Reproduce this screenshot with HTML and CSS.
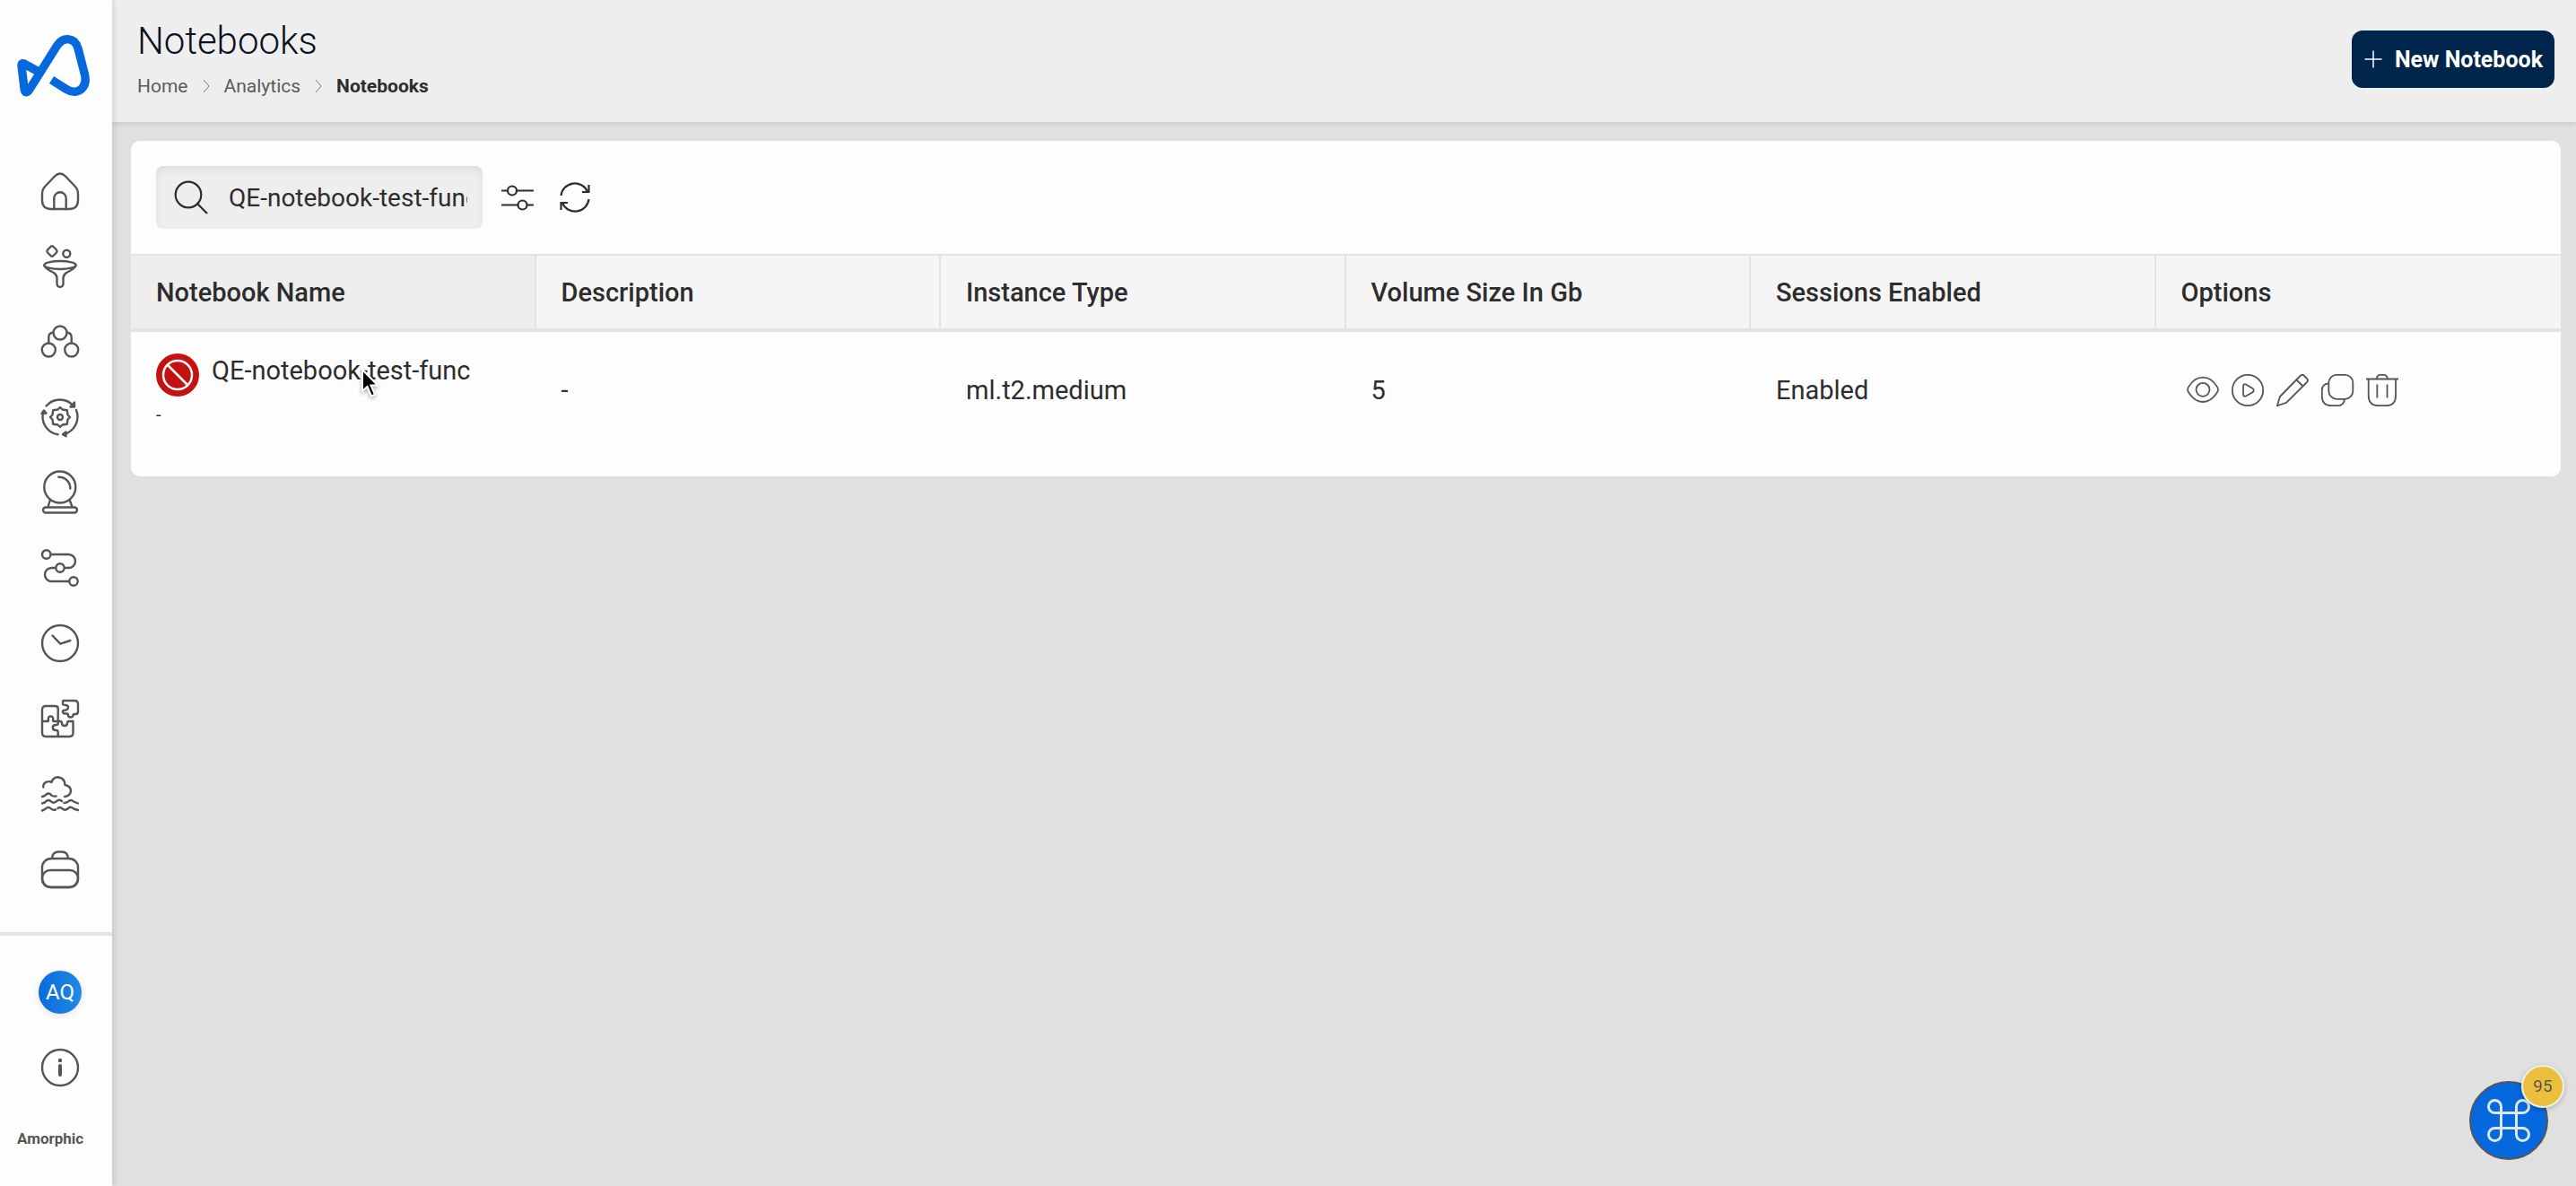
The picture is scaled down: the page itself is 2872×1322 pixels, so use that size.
FILE: index.html
```html
<!DOCTYPE html>
<html lang="en">
<head>
    <meta charset="UTF-8">
    <meta name="viewport" content="width=device-width, initial-scale=1">
    <title>Notebooks</title>
    <link rel="stylesheet" href="styles.css">
</head>
<body>
    <!-- side navigation -->
    <aside class="sidebar">
        <a href="#" class="logo" aria-label="Amorphic home">
            <svg width="81" height="69" viewBox="19 39 81 69" fill="none" stroke="#0568dc" stroke-width="9.4" stroke-linejoin="round">
                <path d="M57.5 89 L74 99.5 C86 107 98 98 94.500 83 L87 54 C84 42 71 40 63.500 51 L33 99.500 C30.500 104 27.500 104 27 98.500 L24 73 C24 70 26 70 28.500 72 L45 81"/>
            </svg>
        </a>
        <nav class="menu">
            <a href="#" aria-label="Home">
                <svg class="icon" viewBox="0 0 42 42"><path d="M4.500 15.500 L15 4.500 Q21 -1.500 27 4.500 L37.500 15.500 Q41 19 41 24 V31 Q41 41 31 41 H11 Q1 41 1 31 V24 Q1 19 4.500 15.500Z"/><path d="M14.300 41V29a6.700 6.700 0 0 1 13.400 0V41"/></svg>
            </a>
            <a href="#" aria-label="Ingestion">
                <svg class="icon" viewBox="0 0 42 42"><path d="M10.500 -1 Q12 -2.500 13.500 -1 L17 2.500 Q18 4 17 5.500 L13.500 9 Q12 10.500 10.500 9 L7 5.500 Q6 4 7 2.500Z"/><circle cx="28.300" cy="6.700" r="4"/><ellipse cx="21" cy="19.500" rx="17.700" ry="4.500"/><path d="M3.500 20.500 Q5 23.500 14 28 Q17.500 30.500 17.500 34 V40.500 a3.500 3.500 0 0 0 7 0 V34 Q24.500 30.500 28 28 Q37 23.500 38.500 20.500"/></svg>
            </a>
            <a href="#" aria-label="Datasets">
                <svg class="icon" viewBox="0 0 42 42"><circle cx="21" cy="11" r="7.500"/><circle cx="8.300" cy="30" r="7.500"/><circle cx="33.700" cy="30" r="7.500"/><path d="M13.500 10.500 Q8.300 11 8.300 16 V22.500 M28.500 10.500 Q33.700 11 33.700 16 V22.500"/></svg>
            </a>
            <a href="#" aria-label="Transformation">
                <svg class="icon" viewBox="0 0 42 42"><path d="M5.500 8.500 A20 20 0 0 1 36 8.500 M39 13 A20 20 0 0 1 25 40 M18.500 40.300 A20 20 0 0 1 2.500 14.500"/><path fill="#555" d="M37 4.500 V9.500 H32.500Z M27.500 37.500 L24 40.300 L27.500 42.300Z M0.500 17 L3 13.500 L5.500 16.500Z"/><path d="M21 10 L23.500 12.500 L28.800 13.200 L29.500 18.500 L32 21 L29.500 23.500 L28.800 28.800 L23.500 29.500 L21 32 L18.500 29.500 L13.200 28.800 L12.500 23.500 L10 21 L12.500 18.500 L13.200 13.200 L18.500 12.500Z"/><circle cx="21" cy="21" r="3"/></svg>
            </a>
            <a href="#" aria-label="Insights">
                <svg class="icon" viewBox="0 0 42 42"><circle cx="20.800" cy="15" r="17.500"/><path d="M19.300 3.700 A12.500 12.500 0 0 1 32.300 16.500 M10 29 L7.500 37 M31.500 29 L34.500 37"/><rect x="2" y="37.500" width="38" height="6" rx="3"/></svg>
            </a>
            <a href="#" aria-label="Workflows">
                <svg class="icon" viewBox="0 0 42 42"><circle cx="5.700" cy="6" r="4.700"/><circle cx="21" cy="21" r="4.700"/><circle cx="36" cy="36" r="4.700"/><path d="M10.500 6 H30.500 a7.500 7.500 0 0 1 0 15 H26 M16 21 H11.500 a7.500 7.500 0 0 0 0 15 H31"/></svg>
            </a>
            <a href="#" aria-label="Schedules">
                <svg class="icon" viewBox="0 0 42 42"><circle cx="21" cy="21" r="20"/><path d="M12.500 12.500 L21.300 21.700 L32.300 18"/></svg>
            </a>
            <a href="#" aria-label="Apps">
                <svg class="icon" viewBox="0 0 42 42"><path d="M1 37 V11 Q1 7 5 7 H15.500 Q18.700 7 18.700 10 V24 H14 Q12.500 24 13.200 22 Q13.500 18.500 10.500 18.500 Q7.500 18.500 7.800 22 Q8.500 24 7 24 H1 M18.700 24 H21 Q23 24 23 26 Q23 29 26 29 Q29 29 29 26 Q29 24 31 24 H35.500 V37 Q35.500 41 31.500 41 H5 Q1 41 1 37 M18.700 24 V26.500 Q18.500 28.500 16.500 28 Q12.800 28 12.800 31 Q12.800 34 16.500 34 Q18.500 34 18.700 36 V41"/><path d="M24 5 V2 Q24 1 25 1 H37 Q41 1 41 5 V13 Q41 16 38.500 16 H37 Q35.500 16 35.500 17.500 Q35 19.500 32.500 19.500 Q30 19.500 30 17 Q30 15.500 28.500 15.500 H26.500 Q24 15.500 24 13 Q24 11.500 27 11.500 Q30 11 30 8.500 Q30 6 27 6 Q24.500 6 24 5Z"/></svg>
            </a>
            <a href="#" aria-label="Data lakes">
                <svg class="icon" viewBox="0 0 42 42"><path d="M2.300 13.500 Q2 8.500 6.500 7.500 Q9 6.500 11.500 8 Q13 2.300 18.700 2.300 Q26 3 26.500 11 Q33 12 33 18 Q32 23.500 26 24"/><path d="M1 24 Q4 23.500 5.500 21.500 Q8 19.500 10.500 21.500 Q12 24 16.500 23.500 M1 31.500 Q4 31 5.500 29 Q8 27 10.500 29 Q13 32 16.500 29.500 Q20 26.500 23 29 M25.500 31 Q29 31 31 28.800 Q33.500 27 36 29.500 L41 31.500 M1 39.500 Q4 38.500 6 36.500 Q8.500 35 11 37.500 Q13 39.500 16 38.500 M18.500 37 Q21 35 23.500 37.500 Q26.500 40 30 37 Q33 34.500 36 37.500 L41 39"/></svg>
            </a>
            <a href="#" aria-label="Management">
                <svg class="icon" viewBox="0 0 42 42"><rect x="1" y="9" width="40" height="32" rx="10"/><rect x="1" y="22" width="40" height="19" rx="9"/><path d="M12 9 Q12.500 1.500 19 1.500 H23 Q29.500 1.500 30 9"/></svg>
            </a>
        </nav>
        <div class="account">
            <button type="button" class="avatar">AQ</button>
            <button type="button" class="info" aria-label="Information">
                <svg class="icon" viewBox="0 0 42 42"><circle cx="21" cy="21" r="20"/><circle cx="21" cy="13" r="2.200" fill="#555" stroke="none"/><path stroke-width="4" d="M21 19 V29"/></svg>
            </button>
        </div>
        <span class="brand">Amorphic</span>
    </aside>

    <div class="page">
        <header class="topbar">
            <div class="heading">
                <h1>Notebooks</h1>
                <nav class="crumbs" aria-label="Breadcrumb">
                    <a href="#">Home</a>
                    <svg width="8" height="16" viewBox="0 0 8 16"><path d="M1 1 L7 8 L1 15"/></svg>
                    <a href="#">Analytics</a>
                    <svg width="8" height="16" viewBox="0 0 8 16"><path d="M1 1 L7 8 L1 15"/></svg>
                    <span class="current">Notebooks</span>
                </nav>
            </div>
            <button type="button" class="new-btn">
                <svg width="20" height="20" viewBox="0 0 20 20"><path d="M10 0.500 V19.500 M0.500 10 H19.500"/></svg>
                New Notebook
            </button>
        </header>

        <main class="card">
            <div class="toolbar">
                <label class="search">
                    <svg width="37" height="37" viewBox="0 0 37 37"><circle cx="15" cy="15" r="14.300"/><path d="M25 25 L36 36"/></svg>
                    <input type="text" value="QE-notebook-test-func" aria-label="Search notebooks">
                </label>
                <button type="button" class="tool" aria-label="Filters">
                    <svg width="36" height="36" viewBox="0 0 36 36"><path d="M0 10.500 H7 M17 10.500 H36 M0 26.500 H18.500 M28.500 26.500 H36"/><circle cx="12" cy="10.500" r="5"/><circle cx="23.500" cy="26.500" r="5"/></svg>
                </button>
                <button type="button" class="tool" aria-label="Refresh">
                    <svg width="36" height="36" viewBox="0 0 36 36"><path d="M2.500 16 A15.500 15.500 0 0 1 32 11.500 M33.500 20 A15.500 15.500 0 0 1 4 24.500"/><path d="M33.500 4 V12 H26 M2.500 32 V24 H10"/></svg>
                </button>
            </div>
            <table class="list">
                <thead>
                    <tr>
                        <th class="sorted">Notebook Name</th>
                        <th>Description</th>
                        <th>Instance Type</th>
                        <th>Volume Size In Gb</th>
                        <th>Sessions Enabled</th>
                        <th>Options</th>
                    </tr>
                </thead>
                <tbody>
                    <tr>
                        <td>
                            <div class="name">
                                <svg width="48" height="48" viewBox="0 0 48 48"><circle cx="24" cy="24" r="24" fill="#c41212"/><circle cx="24" cy="24" r="16" fill="none" stroke="#fff" stroke-width="2.500"/><path d="M12.500 12.500 L35.500 35.500" stroke="#fff" stroke-width="2.500"/></svg>
                                <span>QE-notebook-test-func</span>
                            </div>
                            <div class="sub">-</div>
                        </td>
                        <td>-</td>
                        <td>ml.t2.medium</td>
                        <td>5</td>
                        <td>Enabled</td>
                        <td>
                            <div class="actions">
                                <button type="button" aria-label="View">
                                    <svg viewBox="0 0 36 36"><path d="M2.500 13.500 Q9 3.700 18 3.700 Q27 3.700 33.500 13.500 Q36.500 17.300 33.500 21 Q27 31 18 31 Q9 31 2.500 21 Q-0.500 17.300 2.500 13.500Z"/><circle cx="18" cy="17.300" r="7.500"/></svg>
                                </button>
                                <button type="button" aria-label="Start">
                                    <svg viewBox="0 0 36 36"><circle cx="18" cy="18" r="17.200"/><path d="M13 13.500 Q13 10.500 16 11.500 L23.500 16 Q26 18 23.500 20.200 L16 24.500 Q13 25.500 13 22.500Z"/></svg>
                                </button>
                                <button type="button" aria-label="Edit">
                                    <svg viewBox="0 0 36 36"><path d="M0.800 35.300 L4 25 L26.500 2 Q28.500 -0.200 30.500 1.500 L34 5 Q36 7 34 9 L11 31.800Z M22.500 6.500 L29.500 13.500"/></svg>
                                </button>
                                <button type="button" aria-label="Clone">
                                    <svg viewBox="0 0 36 36"><rect x="8.300" y="0.800" width="27" height="27" rx="9"/><path d="M8.300 10.300 Q0.800 11 0.800 18 V24.500 Q0.800 35.200 11.500 35.200 H18 Q25 35.200 26 27.800"/></svg>
                                </button>
                                <button type="button" aria-label="Delete">
                                    <svg viewBox="0 0 36 36"><path d="M0 5.500 H36 M11.700 5.500 Q12 0.800 16 0.800 H19.500 Q23.500 0.800 24 5.500 M2.700 5.500 V24 Q2.700 35.200 14 35.200 H22 Q33 35.200 33 24 V5.500 M12.300 11.500 V26.500 M23.500 11.500 V26.500"/></svg>
                                </button>
                            </div>
                        </td>
                    </tr>
                </tbody>
            </table>
        </main>
    </div>

    <!-- shortcut launcher -->
    <button type="button" class="launcher" aria-label="Shortcuts">
        <svg width="48" height="48" viewBox="0 0 48 48"><path d="M15.500 15.500 V8.500 A7 7 0 1 0 8.500 15.500 H39.500 A7 7 0 1 0 32.500 8.500 V39.500 A7 7 0 1 0 39.500 32.500 H8.500 A7 7 0 1 0 15.500 39.500Z"/></svg>
        <span class="badge">95</span>
    </button>

    <!-- mouse pointer -->
    <svg class="pointer" width="20" height="32" viewBox="0 0 20 32"><path d="M1 1 V25 L6.500 20 L11 30.500 L15 28.800 L10.500 18.500 H18Z"/></svg>
</body>
</html>
```
FILE: styles.css
```css
* {
    box-sizing: border-box;
}

body {
    display: flex;
    margin: 0;
    min-height: 100vh;
    background: #e0e0e0;
    color: #2d2d2d;
    font-family: Roboto, "Liberation Sans", sans-serif;
    font-size: 28px;
}

button {
    padding: 0;
    border: 0;
    background: none;
    color: inherit;
    font: inherit;
    cursor: pointer;
}

a {
    color: inherit;
    text-decoration: none;
}

svg {
    display: block;
    flex: none;
    overflow: visible;
}

/* Sidebar */
.sidebar {
    display: flex;
    flex: none;
    flex-direction: column;
    width: 125px;
    padding: 39px 0 43px;
    background: #fdfdfd;
    box-shadow: 0 0 8px rgba(0, 0, 0, .18);
    color: #555;
    z-index: 1;
}

.logo {
    margin: 0 0 84px 19px;
}

.icon {
    width: 42px;
    height: 42px;
    fill: none;
    stroke: #555;
    stroke-width: 2.4;
    stroke-linecap: round;
    stroke-linejoin: round;
}

.menu {
    display: flex;
    flex-direction: column;
    align-items: center;
    gap: 42px;
    padding-left: 9px;
}

.account {
    display: flex;
    flex-direction: column;
    align-items: center;
    gap: 39px;
    margin-top: auto;
    padding: 39px 0 48px 9px;
    border-top: 4px solid #e4e4e4;
}

.avatar {
    width: 48px;
    height: 48px;
    border-radius: 50%;
    background: linear-gradient(90deg, #0b6bdc, #1f8ae4);
    box-shadow: 0 2px 8px rgba(0, 0, 0, .12);
    color: #fff;
    font-size: 24px;
}

.brand {
    padding-left: 19px;
    font-size: 17px;
    font-weight: 700;
    line-height: 20px;
}

/* Page header */
.page {
    flex: 1;
    min-width: 0;
}

.topbar {
    display: flex;
    align-items: flex-start;
    justify-content: space-between;
    height: 136px;
    padding: 20px 24px 0 28px;
    background: #eee;
    box-shadow: 0 2px 6px rgba(0, 0, 0, .1);
}

h1 {
    margin: 0;
    color: #0a121e;
    font-size: 42px;
    font-weight: 300;
    line-height: 52px;
}

.crumbs {
    display: flex;
    align-items: center;
    gap: 16px;
    margin-top: 12px;
    color: #5c5c5c;
    font-size: 21px;
    line-height: 24px;
}

.crumbs svg {
    fill: none;
    stroke: #777;
}

.current {
    color: #2d2d2d;
    font-weight: 700;
}

.new-btn {
    display: flex;
    align-items: center;
    gap: 14px;
    height: 64px;
    margin-top: 14px;
    padding: 0 13px 0 14px;
    border-radius: 12px;
    background: #00254a;
    color: #fff;
    font-size: 25px;
    font-weight: 700;
}

.new-btn svg {
    stroke: #fff;
    stroke-width: 1.5;
}

/* Table card */
.card {
    margin: 21px 17px 0 21px;
    border-radius: 10px;
    background: #fdfdfd;
    overflow: hidden;
}

.toolbar {
    display: flex;
    align-items: center;
    height: 126px;
    padding: 0 28px;
}

.search {
    display: flex;
    align-items: center;
    gap: 23px;
    width: 364px;
    height: 70px;
    padding: 0 17px 0 21px;
    border-radius: 8px;
    background: #eee;
    box-shadow: inset 0 4px 8px rgba(0, 0, 0, .07);
}

.search svg,
.tool svg {
    fill: none;
    stroke: #2d2d2d;
    stroke-width: 2.2;
}

.search input {
    flex: 1;
    min-width: 0;
    padding: 0;
    border: 0;
    outline: 0;
    background: none;
    color: inherit;
    font: inherit;
}

.tool {
    margin-left: 21px;
}

.tool + .tool {
    margin-left: 28px;
}

.list {
    width: 100%;
    border-collapse: separate;
    border-spacing: 0;
    table-layout: fixed;
    font-size: 29px;
}

.list th {
    height: 87px;
    padding: 0 28px;
    border-top: 2px solid #e3e3e3;
    border-right: 2px solid #e3e3e3;
    border-bottom: 4px solid #e3e3e3;
    background: #f5f5f5;
    font-weight: 500;
    text-align: left;
}

.list th:last-child {
    border-right: 0;
}

.list .sorted {
    background: #eee;
}

.list td {
    padding: 24px 28px 56px;
}

.name {
    display: flex;
    gap: 14px;
    line-height: 38px;
}

.sub {
    margin-top: 8px;
    font-size: 20px;
    line-height: 25px;
}

.actions {
    display: flex;
    gap: 14px;
    padding-left: 6px;
}

.actions svg {
    width: 36px;
    height: 36px;
    fill: none;
    stroke: #555;
    stroke-width: 1.8;
    stroke-linejoin: round;
}

/* Floating items */
.launcher {
    position: fixed;
    right: 31px;
    bottom: 29px;
    display: flex;
    align-items: center;
    justify-content: center;
    width: 88px;
    height: 88px;
    border: 2px solid #555;
    border-radius: 50%;
    background: #0568dc;
}

.launcher svg {
    fill: none;
    stroke: #dfe9f5;
    stroke-width: 3;
}

.badge {
    position: absolute;
    top: -20px;
    right: -20px;
    width: 48px;
    height: 48px;
    border: 2px solid #eee;
    border-radius: 50%;
    background: #ebbf3c;
    box-shadow: 0 2px 6px rgba(0, 0, 0, .2);
    color: #555;
    font-size: 19px;
    line-height: 44px;
}

.pointer {
    position: absolute;
    top: 411px;
    left: 403px;
    fill: #000;
    stroke: #fff;
    stroke-width: 2;
    filter: drop-shadow(0 2px 2px rgba(0, 0, 0, .3));
    z-index: 2;
}
```
